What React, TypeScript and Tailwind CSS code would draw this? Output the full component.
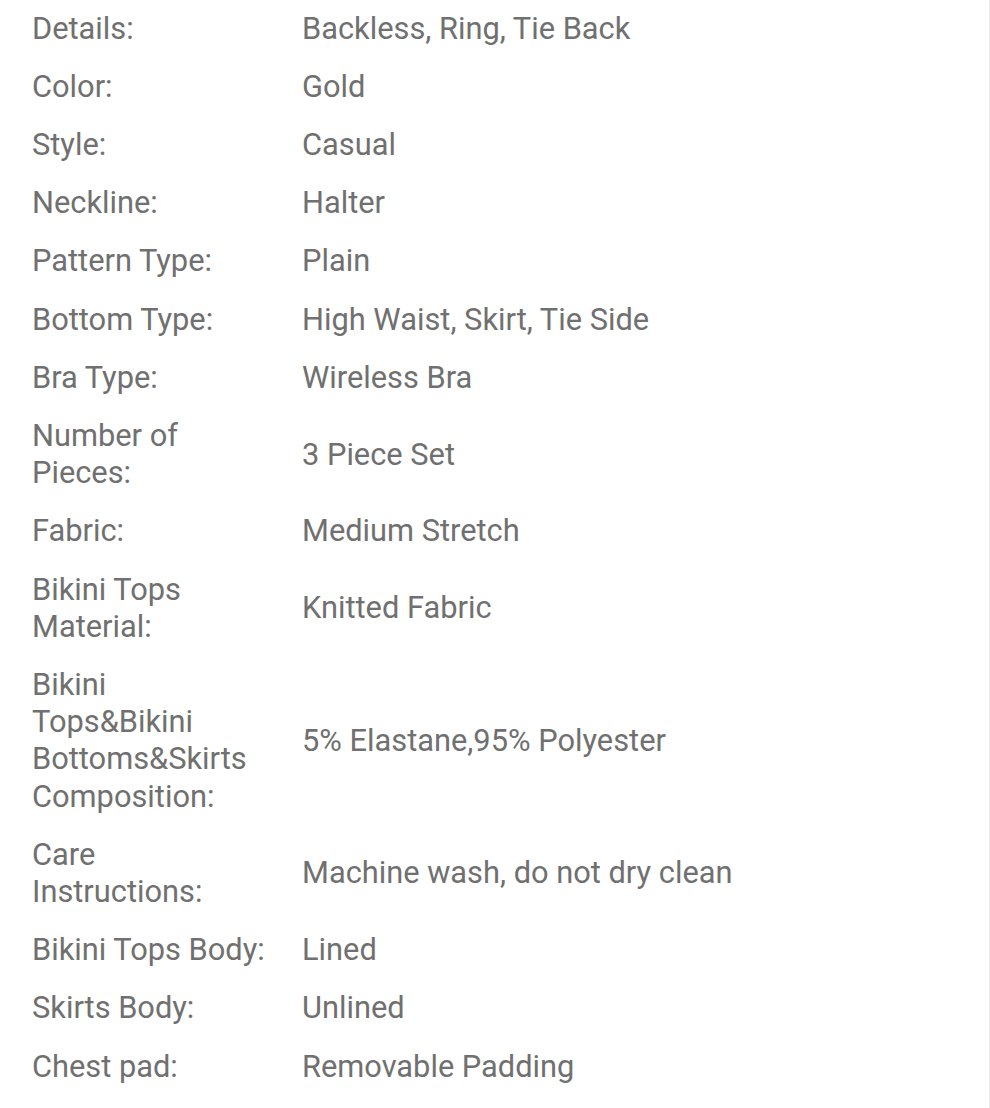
import React from "react";

const rows: [string, string][] = [
  ["Details:", "Backless, Ring, Tie Back"],
  ["Color:", "Gold"],
  ["Style:", "Casual"],
  ["Neckline:", "Halter"],
  ["Pattern Type:", "Plain"],
  ["Bottom Type:", "High Waist, Skirt, Tie Side"],
  ["Bra Type:", "Wireless Bra"],
  ["Number of Pieces:", "3 Piece Set"],
  ["Fabric:", "Medium Stretch"],
  ["Bikini Tops Material:", "Knitted Fabric"],
  ["Bikini Tops&Bikini Bottoms&Skirts Composition:", "5% Elastane,95% Polyester"],
  ["Care Instructions:", "Machine wash, do not dry clean"],
  ["Bikini Tops Body:", "Lined"],
  ["Skirts Body:", "Unlined"],
  ["Chest pad:", "Removable Padding"],
];

export default function App() {
  return (
    <div
      className="w-[990px] h-[1108px] bg-white border-r border-[#ededed] overflow-hidden text-[#707070]"
      style={{ fontFamily: "Roboto, 'Noto Sans', sans-serif" }}
    >
      <div className="mt-[-1px] pl-[32px] flex flex-col">
        {rows.map(([k, v]) => (
          <div key={k} className="grid grid-cols-[236px_1fr] gap-x-[34px] items-center py-[10.5px] text-[30.8px] leading-[37.2px]">
            <div className="break-words">{k}</div>
            <div>{v}</div>
          </div>
        ))}
      </div>
    </div>
  );
}
